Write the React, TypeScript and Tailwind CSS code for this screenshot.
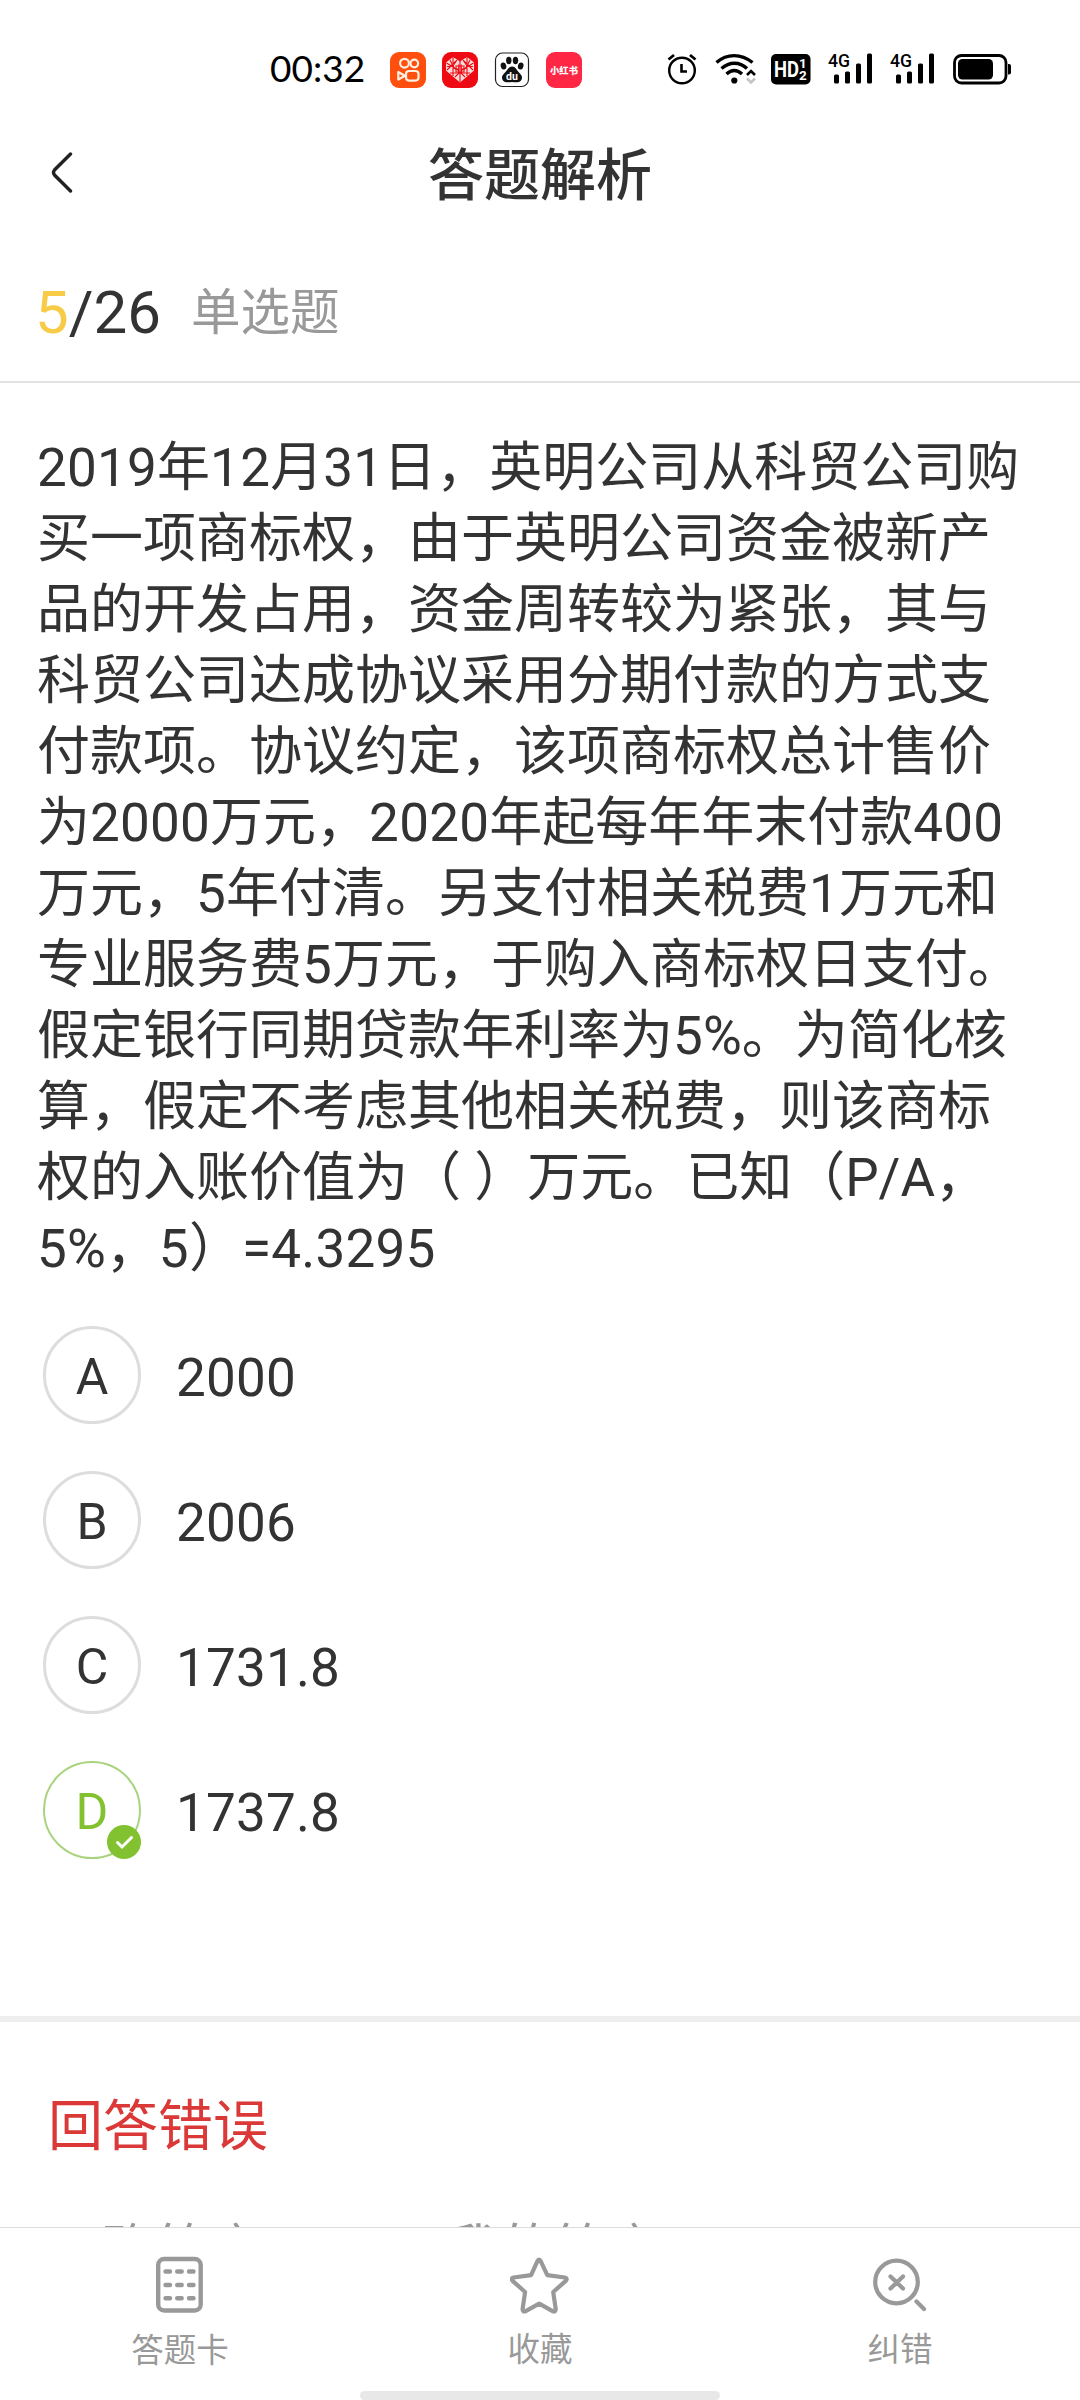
import { useState } from "react";
import clsx from "clsx";

interface Option {
  key: string;
  text: string;
}

const questionLines = [
  "2019年12月31日，英明公司从科贸公司购",
  "买一项商标权，由于英明公司资金被新产",
  "品的开发占用，资金周转较为紧张，其与",
  "科贸公司达成协议采用分期付款的方式支",
  "付款项。协议约定，该项商标权总计售价",
  "为2000万元，2020年起每年年末付款400",
  "万元，5年付清。另支付相关税费1万元和",
  "专业服务费5万元，于购入商标权日支付。",
  "假定银行同期贷款年利率为5%。为简化核",
  "算，假定不考虑其他相关税费，则该商标",
  "权的入账价值为（ ）万元。已知（P/A，",
  "5%，5）=4.3295",
];

const options: Option[] = [
  { key: "A", text: "2000" },
  { key: "B", text: "2006" },
  { key: "C", text: "1731.8" },
  { key: "D", text: "1737.8" },
];

const correctKey = "D";

const KuaishouIcon = () => (
  <svg width="36" height="36" viewBox="0 0 36 36" fill="none">
    <rect width="36" height="36" rx="9" fill="#ff4f0e" />
    <g stroke="#fff0e0" strokeWidth="2.2">
      <circle cx="14.500" cy="11.200" r="4.400" />
      <circle cx="24.300" cy="11.500" r="3.800" />
      <rect x="16" y="19" width="12.500" height="9.600" rx="3" />
      <path d="M8.300 20v7.600l6.500-3.800z" strokeLinejoin="round" />
    </g>
  </svg>
);

const HeartIcon = () => (
  <svg width="36" height="36" viewBox="0 0 36 36" fill="none">
    <rect width="36" height="36" rx="9" fill="#ee0a12" />
    <path d="M4 10.500 11 5l7 4.500L25 5l7 5.500v8L18 30.500 4 18.500z" fill="#fbdcdc" />
    <g stroke="#ee0a12" strokeWidth="1.1">
      <path d="M11 5v19M25 5v19M18 9v7M18 20v10M4.500 11l13 8M31.500 11l-13 8M5 18l9-9M31 18l-9-9M8 21h20M5 14.500h7M24 14.500h7" />
      <path d="M14 14h8v6h-8zM16.700 12.500v9M19.300 12.500v9M13 17h10" />
      <path d="M13 25l5-5 5 5M8 8l3 6 4-6M28 8l-3 6-4-6" />
    </g>
  </svg>
);

const BaiduIcon = () => (
  <svg width="36" height="36" viewBox="0 0 36 36">
    <rect x="1.500" y="1" width="33" height="33.500" rx="7" fill="#fff" stroke="#222" strokeWidth="1.200" />
    <g fill="#111">
      <ellipse cx="9.500" cy="14" rx="2.800" ry="3.500" transform="rotate(-12 9.500 14)" />
      <ellipse cx="14.800" cy="8.500" rx="2.700" ry="3.700" />
      <ellipse cx="21.500" cy="8.500" rx="2.700" ry="3.700" />
      <ellipse cx="26.700" cy="14" rx="2.800" ry="3.500" transform="rotate(12 26.700 14)" />
      <path d="M18 14.500c3.500 0 4.500 3.500 7 6 3 2.800 3.600 4.700 2.500 7.300-1.500 3.300-5.500 2.500-9.500 2.300-4 .2-8 1-9.500-2.300-1.100-2.600-.5-4.500 2.500-7.300 2.500-2.500 3.500-6 7-6z" />
    </g>
    <text x="18" y="27.500" fontSize="10.500" fontWeight="700" textAnchor="middle" fill="#fff">
      du
    </text>
  </svg>
);

const RedBookIcon = () => (
  <svg width="36" height="36" viewBox="0 0 36 36">
    <rect width="36" height="36" rx="9" fill="#ff2743" />
    <text x="18" y="21.500" fontSize="9.300" fontWeight="900" textAnchor="middle" fill="#fff">
      小红书
    </text>
  </svg>
);

const AlarmIcon = () => (
  <svg width="30" height="32" viewBox="0 0 30 32" fill="none" stroke="#000">
    <circle cx="15" cy="17.500" r="12.800" strokeWidth="2.400" />
    <path d="M14.500 11v7.500h5.500" strokeWidth="2.600" />
    <path d="M1.500 6.500 7 2M28.500 6.500 23 2" strokeWidth="2.800" />
  </svg>
);

const WifiIcon = () => (
  <svg width="42" height="32" viewBox="0 0 42 32" fill="none" stroke="#000">
    <path d="M1.500 9.500C12 .300 26 .300 37.500 9.500" strokeWidth="3.400" />
    <path d="M6.500 15.500c8-7 18-7 25.500 0" strokeWidth="3.400" />
    <path d="M11.500 21c5-4.500 10.500-4.500 15.500 0" strokeWidth="3.400" />
    <circle cx="19.300" cy="27.500" r="3.100" fill="#000" stroke="none" />
    <path d="m32 22 4-4 4 4" strokeWidth="2.600" />
    <path d="m32 25.500 4 4 4-4" stroke="#c4c4c4" strokeWidth="2.600" />
  </svg>
);

const HdIcon = () => (
  <svg width="40" height="31" viewBox="0 0 40 31" fill="#fff" fontWeight="700">
    <rect width="39.500" height="30.500" rx="5" fill="#000" />
    <text x="3" y="23" fontSize="22" textLength="25" lengthAdjust="spacingAndGlyphs">
      HD
    </text>
    <text x="28" y="14" fontSize="13.500">
      1
    </text>
    <text x="28" y="26" fontSize="13.500">
      2
    </text>
  </svg>
);

const SignalIcon = () => (
  <svg width="46" height="32" viewBox="0 0 46 32" overflow="visible">
    <text x="0" y="14" fontSize="18.500" fontWeight="500" textLength="22" lengthAdjust="spacingAndGlyphs">
      4G
    </text>
    <rect x="6" y="21.500" width="5" height="9" rx="1.500" />
    <rect x="17" y="18.500" width="5" height="12" rx="1.500" />
    <rect x="28" y="10.500" width="5" height="20" rx="1.500" />
    <rect x="39" y=".5" width="5" height="30" rx="1.500" />
  </svg>
);

const BatteryIcon = () => (
  <svg width="60" height="31" viewBox="0 0 60 31">
    <rect x="2.500" y="1.500" width="51.500" height="27.500" rx="7" fill="none" stroke="#000" strokeWidth="2.800" />
    <rect x="6" y="5" width="35" height="20.500" rx="4.500" />
    <path d="M56 10h1a2 2 0 0 1 2 2v6.500a2 2 0 0 1-2 2h-1z" />
  </svg>
);

const SheetIcon = () => (
  <svg width="60" height="60" viewBox="0 0 60 60" fill="none" stroke="#999" strokeWidth="4.400">
    <rect x="8.200" y="4" width="42.500" height="51.500" rx="6" />
    <path
      d="M15.500 16.500h4.500M27.200 16.500h4.500M39 16.500h4.500M15.500 30h4.500M27.200 30h4.500M39 30h4.500M15.500 43.300h4.500M27.200 43.300h4.500M39 43.300h4.500"
      strokeLinecap="round"
    />
  </svg>
);

const StarIcon = () => (
  <svg width="60" height="60" viewBox="0 0 60 60" fill="none" stroke="#999" strokeWidth="4.200" strokeLinejoin="round">
    <path d="M27.300 6.300q1.700-3.600 3.500 0l6.500 13.800 17.500 2.400q3.200.8 1 3.400L43.200 37l2.500 17q.1 3.300-3.100 2.200L29.200 48.700l-13.500 7.500q-3.200 1.100-3.100-2.200l2.500-17L2.600 25.900q-2.200-2.600 1-3.400l17.500-2.400z" />
  </svg>
);

const SearchErrorIcon = () => (
  <svg width="60" height="60" viewBox="0 0 60 60" fill="none" stroke="#999" strokeWidth="4.200" strokeLinecap="round">
    <circle cx="26.500" cy="27" r="21.300" />
    <path d="m20.500 21.500 12.500 12M33 21.500l-12.500 12M46.500 46.500l7.500 7.500" />
  </svg>
);

const StatusBar = () => (
  <div className="flex h-[115px] shrink-0 items-center justify-between pt-[24px] pr-[68px] pl-[270px]">
    <div className="flex items-center">
      <span className="w-[120px] pb-[3px] font-[Lato] text-[37px] leading-[38px] text-black">00:32</span>
      <div className="flex gap-[16px]">
        <KuaishouIcon />
        <HeartIcon />
        <BaiduIcon />
        <RedBookIcon />
      </div>
    </div>
    <div className="flex items-center pb-px">
      <AlarmIcon />
      <div className="ml-[18px]">
        <WifiIcon />
      </div>
      <div className="ml-[14px]">
        <HdIcon />
      </div>
      <div className="ml-[17px]">
        <SignalIcon />
      </div>
      <div className="ml-[16px]">
        <SignalIcon />
      </div>
      <div className="ml-[16px]">
        <BatteryIcon />
      </div>
    </div>
  </div>
);

// digits run slightly wider than the chinese text around them
const QuestionLine = ({ line }: { line: string }) => (
  <p>
    {line.split(/([\d.=]+)/).map((part, i) =>
      i % 2 ? (
        <span key={i} className="tracking-[0.24px]">
          {part}
        </span>
      ) : (
        part
      )
    )}
  </p>
);

const OptionRow = ({ option, onSelect }: { option: Option; onSelect: () => void }) => {
  const correct = option.key === correctKey;

  return (
    <button onClick={onSelect} className="flex h-[98px] items-center gap-[35px] text-left">
      <span
        className={clsx(
          "relative flex size-[98px] items-center justify-center rounded-full text-[50px]",
          correct ? "border-2 border-[#a9d47f] text-[#82c12f]" : "border-3 border-[#ddd]"
        )}
      >
        <span className="pt-[4px]">{option.key}</span>
        {correct && (
          <span className="absolute -right-[2px] -bottom-[2px] flex size-[34px] items-center justify-center rounded-full bg-[#82c12f]">
            <svg width="34" height="34" viewBox="0 0 34 34" fill="none" stroke="#fff" strokeWidth="3">
              <path d="m10.500 17.500 4.500 4.500 9.500-9.500" strokeLinecap="round" />
            </svg>
          </span>
        )}
      </span>
      <span className="pt-[8px] text-[53px] tracking-[0.2px]">{option.text}</span>
    </button>
  );
};

const App = () => {
  const [, setSelected] = useState<string | null>(null);

  return (
    <div className="flex h-[2400px] w-[1080px] flex-col overflow-hidden bg-white font-[Roboto,'Noto_Sans_CJK_SC',sans-serif] text-[#333]">
      <StatusBar />

      <header className="grid h-[115px] shrink-0 grid-cols-[200px_1fr_200px] items-center">
        <button className="pl-[50px]">
          <svg width="24" height="42" viewBox="0 0 24 42" fill="none" stroke="#222" strokeWidth="3.4">
            <path d="M20.500 2 4.500 18q-2 2.500 0 5L20.500 39" strokeLinecap="round" />
          </svg>
        </button>
        <h1 className="pt-[7px] text-center text-[56px] leading-[56px] font-medium">答题解析</h1>
      </header>

      <div className="flex h-[153px] shrink-0 items-center border-b-2 border-[#e2e2e2] pt-[14px] pl-[35px]">
        <div className="w-[156px] text-[60px] leading-[60px]">
          <span className="text-[#f8cb46]">5</span>/26
        </div>
        <span className="text-[49.5px] leading-[60px] text-[#999]">单选题</span>
      </div>

      <main className="flex min-h-0 flex-1 flex-col overflow-hidden">
        <div className="shrink-0 pt-[50px] pl-[37px] text-[53px] leading-[71px] whitespace-pre">
          {questionLines.map((line) => (
            <QuestionLine key={line} line={line} />
          ))}
        </div>

        <div className="flex shrink-0 flex-col gap-[47px] pt-[41px] pl-[43px]">
          {options.map((option) => (
            <OptionRow key={option.key} option={option} onSelect={() => setSelected(option.key)} />
          ))}
        </div>

        <div className="mt-[157px] h-[6px] shrink-0 bg-[#eee]" />

        <div className="shrink-0 pt-[74px] pl-[48px]">
          <h2 className="text-[55px] leading-[60px] text-[#db3838]">回答错误</h2>
          <div className="mt-[65px] flex text-[54px] leading-[60px] text-[#999]">
            <span className="w-[398px]">正确答案</span>
            <span>我的答案</span>
          </div>
        </div>
      </main>

      <footer className="flex h-[173px] shrink-0 flex-col justify-between border-t border-[#ddd]">
        <nav className="grid grid-cols-3 pt-[27px] text-[32.5px] leading-[36px] text-[#999]">
          <button className="flex flex-col items-center gap-[18px]">
            <SheetIcon />
            答题卡
          </button>
          <button className="flex flex-col items-center gap-[17px]">
            <StarIcon />
            收藏
          </button>
          <button className="flex flex-col items-center gap-[17px]">
            <SearchErrorIcon />
            纠错
          </button>
        </nav>
        <div className="mx-auto h-[9px] w-[360px] rounded-full bg-[#e8e8e8]" />
      </footer>
    </div>
  );
};

export default App;
